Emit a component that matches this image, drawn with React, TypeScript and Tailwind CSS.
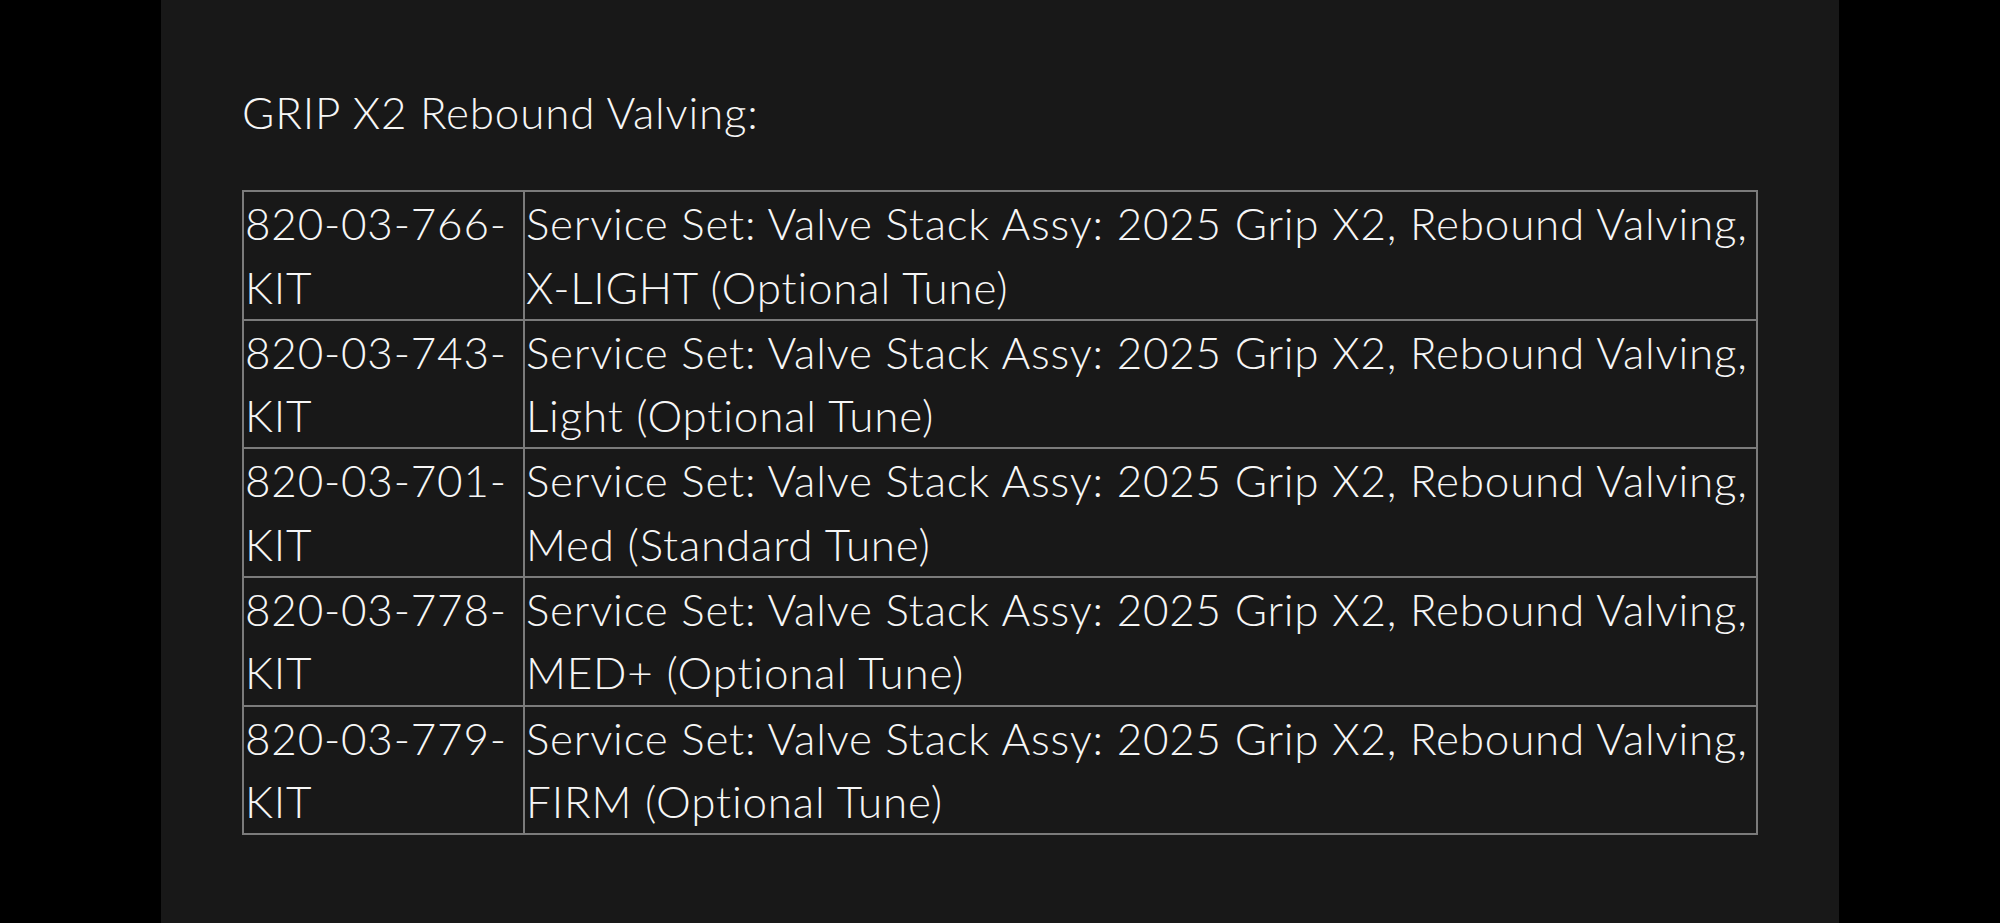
import React from 'react';

const rows = [
    { part: '820-03-766-KIT', desc: 'Service Set: Valve Stack Assy: 2025 Grip X2, Rebound Valving, X-LIGHT (Optional Tune)' },
    { part: '820-03-743-KIT', desc: 'Service Set: Valve Stack Assy: 2025 Grip X2, Rebound Valving, Light (Optional Tune)' },
    { part: '820-03-701-KIT', desc: 'Service Set: Valve Stack Assy: 2025 Grip X2, Rebound Valving, Med (Standard Tune)' },
    { part: '820-03-778-KIT', desc: 'Service Set: Valve Stack Assy: 2025 Grip X2, Rebound Valving, MED+ (Optional Tune)' },
    { part: '820-03-779-KIT', desc: 'Service Set: Valve Stack Assy: 2025 Grip X2, Rebound Valving, FIRM (Optional Tune)' },
];

const App: React.FC = () => {
    return (
        <div className="min-h-screen w-full bg-black">
            <div
                className="mx-auto min-h-screen w-[1678px] bg-[#181818] px-[81px] pt-[81px] text-[44px] font-light leading-[63.3px] tracking-[0.8px] text-[#f6f6f6]"
                style={{ fontFamily: 'Lato, "Open Sans", sans-serif' }}
            >
                <p>GRIP X2 Rebound Valving:</p>

                <table className="mt-[46px] w-full border-separate border-spacing-0 border border-[#7b7b7b]">
                    <tbody>
                        {rows.map((r) => (
                            <tr key={r.part}>
                                <td className="w-[281px] border border-[#7b7b7b] p-0 pl-px align-top">
                                    {r.part.replace('-KIT', '-')}
                                    <br />
                                    KIT
                                </td>
                                <td className="border border-[#7b7b7b] p-0 pl-px align-top">{r.desc}</td>
                            </tr>
                        ))}
                    </tbody>
                </table>
            </div>
        </div>
    );
};

export default App;
